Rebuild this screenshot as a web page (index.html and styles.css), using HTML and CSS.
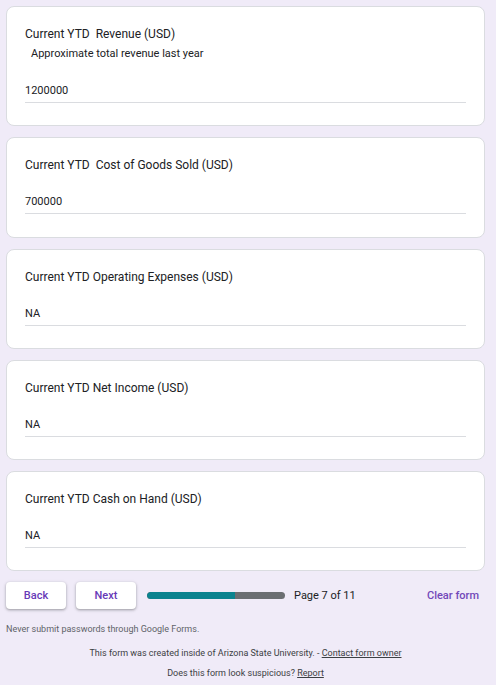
FILE: index.html
```html
<!DOCTYPE html>
<html>
<head>
<meta charset="utf-8">
<link rel="stylesheet" href="styles.css">
</head>
<body>
<div class="page">
  <div class="card">
    <div class="q-title">Current YTD&nbsp; Revenue (USD)</div>
    <div class="q-desc">Approximate total revenue last year</div>
    <div class="answer">1200000</div>
  </div>
  <div class="card">
    <div class="q-title">Current YTD&nbsp; Cost of Goods Sold (USD)</div>
    <div class="answer">700000</div>
  </div>
  <div class="card">
    <div class="q-title">Current YTD Operating Expenses (USD)</div>
    <div class="answer">NA</div>
  </div>
  <div class="card">
    <div class="q-title">Current YTD Net Income (USD)</div>
    <div class="answer">NA</div>
  </div>
  <div class="card">
    <div class="q-title">Current YTD Cash on Hand (USD)</div>
    <div class="answer">NA</div>
  </div>
  <div class="nav">
    <button class="btn">Back</button>
    <button class="btn">Next</button>
    <div class="progress"><div class="progress-fill" style="width:63.6%"></div></div>
    <div class="page-num">Page 7 of 11</div>
    <div class="clear">Clear form</div>
  </div>
  <div class="warn">Never submit passwords through Google Forms.</div>
  <div class="foot">This form was created inside of Arizona State University. - <span class="link">Contact form owner</span></div>
  <div class="foot foot2">Does this form look suspicious? <span class="link">Report</span></div>
</div>
</body>
</html>
```
FILE: styles.css
```css
html, body {
  margin: 0;
  padding: 0;
  background: #f0ebf8;
}
body {
  font-family: Roboto, "Liberation Sans", Arial, sans-serif;
  color: #202124;
}
.page {
  width: 479px;
  padding: 6px 0 0 6px;
  display: flex;
  flex-direction: column;
}
.card {
  background: #fff;
  border: 1px solid #dadce0;
  border-radius: 8px;
  padding: 19px 18px 22.3px 18px;
  margin-bottom: 11px;
}
.q-title {
  font-size: 12px;
  line-height: 16px;
  color: #202124;
}
.q-desc {
  font-size: 11px;
  line-height: 16px;
  margin-top: 4px;
  padding-left: 6px;
  color: #202124;
}
.answer {
  font-size: 11px;
  line-height: 16px;
  margin-top: 21px;
  padding-bottom: 3px;
  border-bottom: 1px solid #dadce0;
  color: #202124;
}
.nav {
  display: flex;
  align-items: center;
  height: 27px;
}
.btn {
  width: 60px;
  height: 27px;
  background: #fff;
  border: none;
  border-radius: 4px;
  box-shadow: 0 1px 2px rgba(60,64,67,0.3), 0 1px 3px 1px rgba(60,64,67,0.15);
  color: #673ab7;
  font-family: Roboto, "Liberation Sans", Arial, sans-serif;
  font-size: 11px;
  font-weight: 500;
  padding: 0;
  margin-right: 10px;
}
.progress {
  width: 138px;
  height: 7px;
  border-radius: 4px;
  background: #6b6e72;
  margin-left: 1px;
  overflow: hidden;
}
.progress-fill {
  height: 100%;
  background: #0b838f;
  border-radius: 4px 0 0 4px;
}
.page-num {
  font-size: 11px;
  margin-left: 9px;
  color: #202124;
}
.clear {
  margin-left: auto;
  font-size: 11px;
  font-weight: 500;
  color: #7248b9;
  margin-right: 6px;
}
.warn {
  font-size: 9px;
  color: #5f6368;
  margin-top: 14px;
  line-height: 12px;
}
.foot {
  font-size: 9px;
  color: #3c4043;
  text-align: center;
  line-height: 12px;
  margin-top: 12px;
}
.foot2 {
  margin-top: 8px;
}
.link {
  text-decoration: underline;
}
```
